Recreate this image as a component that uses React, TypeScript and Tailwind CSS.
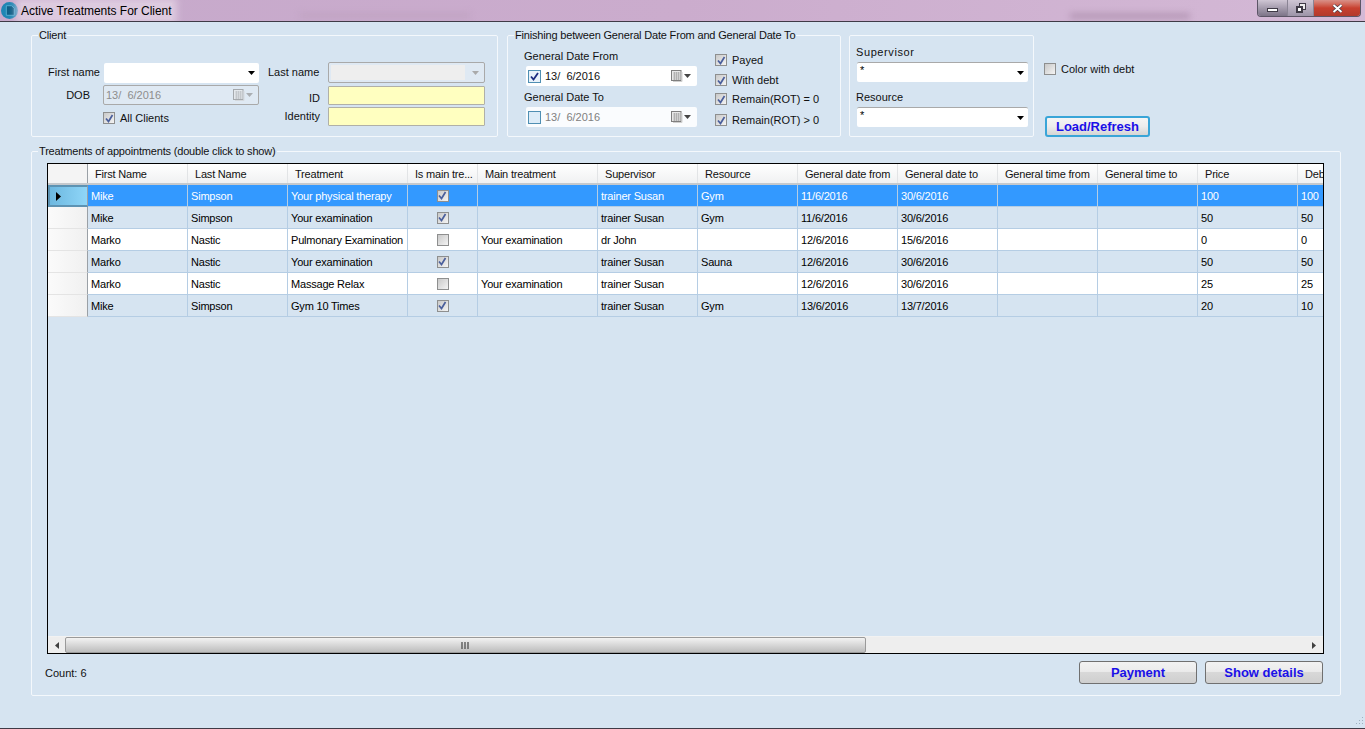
import React from "react";

const FONT = { fontFamily: '"Liberation Sans", Arial, sans-serif' };

function Check({ checked = true }: { checked?: boolean }) {
  return (
    <span className="relative inline-flex h-[12px] w-[12px] shrink-0 items-center justify-center border border-[#8e8f8f] bg-gradient-to-br from-[#c9c9c9] to-[#f4f4f4]">
      {checked && (
        <svg viewBox="0 0 9 9" className="h-[9px] w-[9px]">
          <path d="M1 4.5 L3.5 7.5 L7.5 1" fill="none" stroke="#4a5f9c" strokeWidth="1.7" />
        </svg>
      )}
    </span>
  );
}

function DateCheck({ checked }: { checked: boolean }) {
  return (
    <span className="relative inline-flex h-[13px] w-[13px] shrink-0 border border-[#4f8fb3] bg-[#dcecf8]">
      {checked && (
        <svg viewBox="0 0 11 11" className="h-[11px] w-[11px] bg-[#e8f2fa]">
          <path d="M2 5.5 L4.5 8.5 L9 2" fill="none" stroke="#1b2c80" strokeWidth="1.8" />
        </svg>
      )}
    </span>
  );
}

function ComboArrow({ color = "#000" }: { color?: string }) {
  return (
    <svg viewBox="0 0 7 4" className="h-[4px] w-[7px]">
      <path d="M0 0 H7 L3.5 4 Z" fill={color} />
    </svg>
  );
}

function CalIcon() {
  return (
    <svg viewBox="0 0 12 12" className="h-[12px] w-[12px]">
      <rect x="0.5" y="0.5" width="9.5" height="10" fill="#e8e8e8" stroke="#7f7f7f" />
      <path d="M2 3H9M2 5H9M2 7H9M2 9H9M3.5 2V10M5.5 2V10M7.5 2V10" stroke="#a4a4a4" strokeWidth="0.7" />
      <path d="M11 2V11.5H2" stroke="#cfcfcf" fill="none" />
    </svg>
  );
}

function Group({ title, className, children }: { title?: string; className: string; children: React.ReactNode }) {
  return (
    <div className={`relative rounded-[2px] border border-[#f4f8fc] ${className}`}>
      {title && (
        <span className="absolute left-[6px] top-[-7px] bg-[#d6e4f1] pl-[1px] pr-[1px] text-[11px] leading-[13px] tracking-[-0.18px] text-[#111]">
          {title}
        </span>
      )}
      {children}
    </div>
  );
}

function Combo({ value = "", className = "" }: { value?: string; className?: string }) {
  return (
    <div className={`flex items-center justify-between bg-white ${className}`}>
      <span className="self-start pl-[3px] pt-[1px] text-[11px] leading-[13px] text-black">{value}</span>
      <span className="pr-[4px]"><ComboArrow /></span>
    </div>
  );
}

const cols = [
  { name: "First Name", w: 100 },
  { name: "Last Name", w: 100 },
  { name: "Treatment", w: 120 },
  { name: "Is main tre...", w: 70 },
  { name: "Main treatment", w: 120 },
  { name: "Supervisor", w: 100 },
  { name: "Resource", w: 100 },
  { name: "General date from", w: 100 },
  { name: "General date to", w: 100 },
  { name: "General time from", w: 100 },
  { name: "General time to", w: 100 },
  { name: "Price", w: 100 },
  { name: "Debt", w: 100 },
];

const rows: { cells: string[]; main: boolean }[] = [
  { cells: ["Mike", "Simpson", "Your physical therapy", "", "", "trainer Susan", "Gym", "11/6/2016", "30/6/2016", "", "", "100", "100"], main: true },
  { cells: ["Mike", "Simpson", "Your examination", "", "", "trainer Susan", "Gym", "11/6/2016", "30/6/2016", "", "", "50", "50"], main: true },
  { cells: ["Marko", "Nastic", "Pulmonary Examination", "", "Your examination", "dr John", "", "12/6/2016", "15/6/2016", "", "", "0", "0"], main: false },
  { cells: ["Marko", "Nastic", "Your examination", "", "", "trainer Susan", "Sauna", "12/6/2016", "30/6/2016", "", "", "50", "50"], main: true },
  { cells: ["Marko", "Nastic", "Massage Relax", "", "Your examination", "trainer Susan", "", "12/6/2016", "30/6/2016", "", "", "25", "25"], main: false },
  { cells: ["Mike", "Simpson", "Gym 10 Times", "", "", "trainer Susan", "Gym", "13/6/2016", "13/7/2016", "", "", "20", "10"], main: true },
];

function rowBg(i: number) {
  if (i === 0) return "bg-[#3399ff] text-white";
  if (i === 2 || i === 4) return "bg-white text-black";
  return "bg-[#d6e4f1] text-black";
}

export default function App() {
  return (
    <div style={FONT} className="flex h-[729px] w-[1365px] flex-col overflow-hidden bg-[#d6e4f1] text-[11px] text-[#111]">
      {/* title bar */}
      <div className="relative flex h-[22px] shrink-0 items-center overflow-hidden border-b border-[#3f3a46] bg-gradient-to-r from-[#c6a9cb] via-[#cbaccd] to-[#d4b9d6]">
        <span className="absolute left-[1070px] top-[13px] h-[6px] w-[120px] bg-[#b598b6] blur-[3px]" />
        <span className="absolute left-[300px] top-[13px] h-[5px] w-[170px] bg-[#c0a3c2] blur-[3px]" />
        <svg viewBox="0 0 16 16" className="relative ml-[1px] h-[17px] w-[17px]">
          <circle cx="8" cy="8" r="8" fill="#1f86b4" />
          <path d="M5 3.5H10L12.5 6V12.5H5Z" fill="#0e5f87" stroke="#5db5d8" strokeWidth="0.8" />
        </svg>
        <span className="relative ml-[3px] whitespace-nowrap bg-[#e2d2e4]/80 text-[12px] leading-[16px] tracking-[-0.03px] text-black shadow-[0_0_7px_5px_rgba(226,210,228,0.8)]">
          Active Treatments For Client
        </span>
        <div className="absolute right-[4px] top-0 flex h-[17px] overflow-hidden rounded-b-[4px] border border-t-0 border-[#5c5566]">
          <div className="flex w-[30px] items-center justify-center border-r border-[#8a8494] bg-gradient-to-b from-[#cfc6d4] to-[#7d7488]">
            <span className="mt-[4px] h-[4px] w-[11px] border border-[#3f3a46] bg-white" />
          </div>
          <div className="flex w-[26px] items-center justify-center border-r border-[#8a8494] bg-gradient-to-b from-[#cfc6d4] to-[#9d94a8]">
            <span className="relative h-[10px] w-[10px]">
              <span className="absolute right-0 top-0 h-[7px] w-[7px] border border-[#3f3a46] bg-[#eeeeee]" />
              <span className="absolute bottom-0 left-0 h-[7px] w-[7px] border-2 border-[#3f3a46] bg-white" />
            </span>
          </div>
          <div className="flex w-[46px] items-center justify-center bg-gradient-to-b from-[#d89088] via-[#c8402f] to-[#b23a2c]">
            <svg viewBox="0 0 11 9" className="h-[9px] w-[11px]">
              <path d="M1.5 1 L9.5 8 M9.5 1 L1.5 8" stroke="#3f3a46" strokeWidth="3.2" />
              <path d="M1.5 1 L9.5 8 M9.5 1 L1.5 8" stroke="#fff" strokeWidth="2" />
            </svg>
          </div>
        </div>
      </div>

      {/* filters */}
      <div className="mt-[13px] flex h-[103px] shrink-0 pl-[31px]">
        {/* Client */}
        <Group title="Client" className="flex h-[102px] w-[467px]">
          <div className="flex w-[227px] flex-col pt-[26px]">
            <div className="flex h-[21px] items-center">
              <span className="w-[72px] pr-[4px] text-right">First name</span>
              <Combo className="h-[20px] w-[155px] rounded-[2px]" />
            </div>
            <div className="mt-[2px] flex h-[20px] items-center">
              <span className="w-[58px] text-right">DOB</span>
              <div className="ml-[13px] flex h-[20px] w-[156px] items-center justify-between rounded-[2px] border border-[#a9a9a9] bg-[#dfe9f3] pl-[2px] pr-[5px] text-[#8d8d8d]">
                <span>13/&nbsp;&nbsp;6/2016</span>
                <span className="flex items-center gap-[1px] opacity-60"><CalIcon /><ComboArrow color="#888" /></span>
              </div>
            </div>
            <div className="mt-[6px] flex h-[14px] items-center gap-[5px] pl-[71px]">
              <Check />
              <span>All Clients</span>
            </div>
          </div>
          <div className="flex flex-col pt-[26px]">
            <div className="flex h-[21px] items-center">
              <span className="w-[69px] pl-[9px]">Last name</span>
              <div className="flex h-[21px] w-[157px] items-center justify-between rounded-[2px] border border-[#a9a9a9] bg-[#dfe9f3] pl-[2px] pr-[5px]">
                <span className="h-[15px] w-[134px] bg-[#eeeeee]" />
                <ComboArrow color="#aaa" />
              </div>
            </div>
            <div className="mt-[3px] flex h-[19px] items-center">
              <span className="w-[61px] pt-[5px] text-right">ID</span>
              <span className="ml-[8px] h-[19px] w-[157px] rounded-[1px] border border-[#b0b0a8] bg-[#ffffc0]" />
            </div>
            <div className="mt-[2px] flex h-[19px] items-center">
              <span className="w-[61px] text-right">Identity</span>
              <span className="ml-[8px] h-[19px] w-[157px] rounded-[1px] border border-[#b0b0a8] bg-[#ffffc0]" />
            </div>
          </div>
        </Group>

        {/* Finishing */}
        <Group title="Finishing between General Date From and General Date To" className="ml-[9px] flex h-[102px] w-[334px]">
          <div className="flex w-[207px] flex-col pl-[16px] pt-[13px]">
            <span className="leading-[14px]">General Date From</span>
            <div className="ml-[2px] mt-[3px] flex h-[20px] w-[171px] items-center justify-between rounded-[2px] bg-white pl-[2px] pr-[6px] text-[#111]">
              <span className="flex items-center gap-[4px]"><DateCheck checked /><span>13/&nbsp;&nbsp;6/2016</span></span>
              <span className="flex items-center gap-[1px]"><CalIcon /><ComboArrow color="#444" /></span>
            </div>
            <span className="mt-[4px] leading-[14px]">General Date To</span>
            <div className="ml-[2px] mt-[3px] flex h-[20px] w-[171px] items-center justify-between rounded-[2px] bg-[#fafcfe] pl-[2px] pr-[6px] text-[#808080]">
              <span className="flex items-center gap-[4px]"><DateCheck checked={false} /><span>13/&nbsp;&nbsp;6/2016</span></span>
              <span className="flex items-center gap-[1px]"><CalIcon /><ComboArrow color="#444" /></span>
            </div>
          </div>
          <div className="flex flex-col pt-[17px]">
            {["Payed", "With debt", "Remain(ROT) = 0", "Remain(ROT) > 0"].map((t, i) => (
              <div key={t} className={`flex h-[14px] items-center gap-[5px] ${i === 0 ? "" : i === 1 ? "mt-[6px]" : i === 2 ? "mt-[5px]" : "mt-[7px]"}`}>
                <Check />
                <span>{t}</span>
              </div>
            ))}
          </div>
        </Group>

        {/* Supervisor */}
        <Group className="ml-[8px] flex h-[102px] w-[185px] flex-col pl-[6px]">
          <span className="mt-[9px] leading-[14px] tracking-[0.6px]">Supervisor</span>
          <Combo value="*" className="ml-[1px] mt-[3px] h-[20px] w-[171px] rounded-[2px] border-t border-[#a9a9a9]" />
          <span className="mt-[8px] leading-[14px]">Resource</span>
          <Combo value="*" className="ml-[1px] mt-[3px] h-[20px] w-[171px] rounded-[2px] border-t border-[#a9a9a9]" />
        </Group>

        {/* Color with debt + load */}
        <div className="ml-[10px] flex flex-col">
          <div className="mt-[27px] flex h-[14px] items-center gap-[5px]">
            <Check checked={false} />
            <span>Color with debt</span>
          </div>
          <button className="ml-[1px] mt-[40px] h-[21px] w-[105px] rounded-[3px] border-2 border-[#39a5d8] bg-gradient-to-b from-[#f5f5f5] via-[#ececec] to-[#d5d5d5] text-[13px] font-bold leading-[16px] text-[#1a10e8]">
            Load/Refresh
          </button>
        </div>
      </div>

      {/* Treatments */}
      <Group title="Treatments of appointments (double click to show)" className="ml-[31px] mt-[13px] flex h-[545px] w-[1310px] shrink-0 flex-col pl-[15px] pt-[11px]">
        <div className="flex h-[491px] w-[1277px] flex-col overflow-hidden border border-black bg-[#d6e4f1] tracking-[-0.2px]">
          <div className="flex min-h-0 flex-1 flex-col overflow-hidden">
            {/* header */}
            <div className="flex h-[21px] shrink-0 border-b-2 border-[#c5c9cd] bg-gradient-to-b from-white to-[#f0f1f2]">
              <div className="w-[40px] shrink-0 border-r border-[#9aa0a6] bg-[#f4f4f4]" />
              {cols.map((c) => (
                <div
                  key={c.name}
                  style={{ width: c.w }}
                  className="flex shrink-0 items-center whitespace-nowrap border-r border-[#e2e4e6] pl-[7px] leading-[14px] text-[#111]"
                >
                  {c.name}
                </div>
              ))}
            </div>
            {/* rows */}
            {rows.map((r, i) => (
              <div key={i} className="flex h-[22px] shrink-0">
                <div className={`flex w-[40px] shrink-0 items-center border-r border-[#9aa0a6] pl-[6px] ${i === 0 ? "border-b-2 border-l-2 border-t-2 border-b-[#5d93b3] border-l-[#5d93b3] border-t-[#5d93b3] bg-gradient-to-r from-[#6db8e0] to-[#8fd6f8]" : "border-b border-b-[#e4e4e4] bg-gradient-to-r from-[#fbfbfb] to-[#f0f0f0]"}`}>
                  {i === 0 && (
                    <svg viewBox="0 0 5 9" className="h-[9px] w-[5px]"><path d="M0 0 L5 4.5 L0 9Z" fill="#000" /></svg>
                  )}
                </div>
                {cols.map((c, j) => (
                  <div
                    key={c.name}
                    style={{ width: c.w }}
                    className={`flex shrink-0 items-center whitespace-nowrap border-b border-r border-[#b5cde4] leading-[14px] ${rowBg(i)} ${j === 3 ? "justify-center" : "pl-[3px]"}`}
                  >
                    {j === 3 ? <Check checked={r.main} /> : r.cells[j]}
                  </div>
                ))}
              </div>
            ))}
          </div>
          {/* scrollbar */}
          <div className="flex h-[17px] shrink-0 items-center border-t border-[#f2f2f2] bg-[#eeeeee]">
            <div className="flex w-[17px] items-center justify-center">
              <svg viewBox="0 0 4 7" className="h-[7px] w-[4px]"><path d="M4 0 L0 3.5 L4 7Z" fill="#404040" /></svg>
            </div>
            <div className="flex h-[16px] w-[801px] items-center justify-center rounded-[2px] border border-[#9a9a9a] bg-gradient-to-b from-[#f3f3f3] to-[#bdbdbd]">
              <svg viewBox="0 0 9 7" className="h-[7px] w-[9px]">
                <path d="M1 0V7M4 0V7M7 0V7" stroke="#5a5a5a" strokeWidth="1.4" />
              </svg>
            </div>
            <div className="flex-1" />
            <div className="flex w-[18px] items-center justify-center">
              <svg viewBox="0 0 4 7" className="h-[7px] w-[4px]"><path d="M0 0 L4 3.5 L0 7Z" fill="#404040" /></svg>
            </div>
          </div>
        </div>
        <div className="mt-[7px] flex items-center justify-between pr-[17px]">
          <span className="-ml-[2px] pt-[1px]">Count: 6</span>
          <div className="flex gap-[8px]">
            {["Payment", "Show details"].map((t) => (
              <button
                key={t}
                className="h-[23px] w-[118px] rounded-[3px] border border-[#707070] bg-[linear-gradient(#f2f2f2_0%,#ebebeb_45%,#d8d8d8_50%,#cfcfcf_100%)] text-[13px] font-bold leading-[16px] text-[#1a10e8]"
              >
                {t}
              </button>
            ))}
          </div>
        </div>
      </Group>

      {/* resize grip + bottom */}
      <div className="relative min-h-0 flex-1">
        <svg viewBox="0 0 12 12" className="absolute bottom-[2px] right-[1px] h-[12px] w-[12px]">
          <path d="M10 2h1v1h-1zM7 5h1v1H7zM10 5h1v1h-1zM4 8h1v1H4zM7 8h1v1H7zM10 8h1v1h-1z" fill="#9fb0c0" />
        </svg>
        <div className="absolute bottom-0 left-0 right-0 h-[1px] bg-[#3f3a46]" />
      </div>
    </div>
  );
}
